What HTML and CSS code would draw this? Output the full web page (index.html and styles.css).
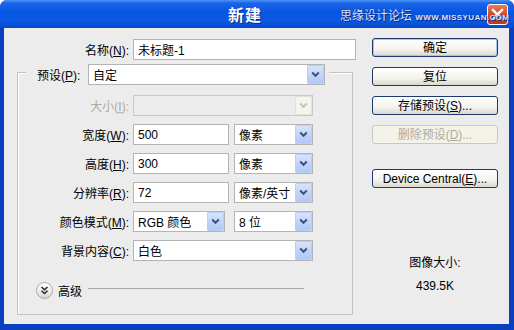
FILE: index.html
```html
<!DOCTYPE html>
<html lang="zh-CN">
  <head>
    <meta charset="UTF-8" />
    <title>新建</title>
    <link rel="stylesheet" href="styles.css">
  </head>
  <body>
    <div class="window">
      <div class="titlebar">
        <span class="title">新建</span>
        <span class="watermark">思缘设计论坛 <b>WWW.MISSYUAN.COM</b></span>
        <span class="close">
          <svg width="13" height="13" viewBox="0 0 13 13"><path d="M2 2 L11 11 M11 2 L2 11" stroke="#fff" stroke-width="2.4" stroke-linecap="square"/></svg>
        </span>
      </div>

      <div class="client">
        <div class="left">
          <div class="name-row">
            <label class="lbl">名称(<u>N</u>):</label>
            <input class="field name-field" type="text" value="未标题-1" />
          </div>

          <div class="group">
            <div class="group-head">
              <label class="head-lbl">预设(<u>P</u>):</label>
              <div class="combo w-preset">
                <span>自定</span>
                <span class="arrow"><svg width="9" height="7" viewBox="0 0 9 7"><polyline points="1.2,1.5 4.5,4.8 7.8,1.5" fill="none" stroke="#3c5384" stroke-width="2"/></svg></span>
              </div>
            </div>

            <div class="rows">
              <div class="row">
                <label class="lbl off">大小(<u>I</u>):</label>
                <div class="combo w-wide disabled">
                  <span></span>
                  <span class="arrow"><svg width="9" height="7" viewBox="0 0 9 7"><polyline points="1.2,1.5 4.5,4.8 7.8,1.5" fill="none" stroke="#c6c5bd" stroke-width="2"/></svg></span>
                </div>
              </div>
              <div class="row">
                <label class="lbl">宽度(<u>W</u>):</label>
                <input class="field w-num" type="text" value="500" />
                <div class="combo w-unit">
                  <span>像素</span>
                  <span class="arrow"><svg width="9" height="7" viewBox="0 0 9 7"><polyline points="1.2,1.5 4.5,4.8 7.8,1.5" fill="none" stroke="#3c5384" stroke-width="2"/></svg></span>
                </div>
              </div>
              <div class="row">
                <label class="lbl">高度(<u>H</u>):</label>
                <input class="field w-num" type="text" value="300" />
                <div class="combo w-unit">
                  <span>像素</span>
                  <span class="arrow"><svg width="9" height="7" viewBox="0 0 9 7"><polyline points="1.2,1.5 4.5,4.8 7.8,1.5" fill="none" stroke="#3c5384" stroke-width="2"/></svg></span>
                </div>
              </div>
              <div class="row">
                <label class="lbl">分辨率(<u>R</u>):</label>
                <input class="field w-num" type="text" value="72" />
                <div class="combo w-unit">
                  <span>像素/英寸</span>
                  <span class="arrow"><svg width="9" height="7" viewBox="0 0 9 7"><polyline points="1.2,1.5 4.5,4.8 7.8,1.5" fill="none" stroke="#3c5384" stroke-width="2"/></svg></span>
                </div>
              </div>
              <div class="row">
                <label class="lbl">颜色模式(<u>M</u>):</label>
                <div class="combo w-mode">
                  <span>RGB 颜色</span>
                  <span class="arrow"><svg width="9" height="7" viewBox="0 0 9 7"><polyline points="1.2,1.5 4.5,4.8 7.8,1.5" fill="none" stroke="#3c5384" stroke-width="2"/></svg></span>
                </div>
                <div class="combo w-bits">
                  <span>8 位</span>
                  <span class="arrow"><svg width="9" height="7" viewBox="0 0 9 7"><polyline points="1.2,1.5 4.5,4.8 7.8,1.5" fill="none" stroke="#3c5384" stroke-width="2"/></svg></span>
                </div>
              </div>
              <div class="row">
                <label class="lbl">背景内容(<u>C</u>):</label>
                <div class="combo w-wide">
                  <span>白色</span>
                  <span class="arrow"><svg width="9" height="7" viewBox="0 0 9 7"><polyline points="1.2,1.5 4.5,4.8 7.8,1.5" fill="none" stroke="#3c5384" stroke-width="2"/></svg></span>
                </div>
              </div>
            </div>

            <div class="advanced">
              <span class="round-btn">
                <svg width="9" height="9" viewBox="0 0 9 9"><polyline points="1.5,1 4.5,3.8 7.5,1" fill="none" stroke="#222" stroke-width="1.4"/><polyline points="1.5,4.8 4.5,7.6 7.5,4.8" fill="none" stroke="#222" stroke-width="1.4"/></svg>
              </span>
              <span class="adv-text">高级</span>
              <span class="adv-line"></span>
            </div>
          </div>
        </div>

        <div class="right">
          <button class="btn default">确定</button>
          <button class="btn">复位</button>
          <button class="btn">存储预设(<u>S</u>)...</button>
          <button class="btn" disabled>删除预设(<u>D</u>)...</button>
          <button class="btn device">Device Central(<u>E</u>)...</button>
          <div class="info">图像大小:</div>
          <div class="info size">439.5K</div>
        </div>
      </div>
    </div>
  </body>
</html>
```

FILE: styles.css
```css
body {
  margin: 0;
  background: #fff;
  font-family: "Liberation Sans", "Noto Sans CJK SC", sans-serif;
  font-size: 12px;
  color: #000;
}
u {
  text-decoration: underline;
}
.window {
  width: 514px;
  height: 330px;
  display: flex;
  flex-direction: column;
  background: #0b3fc2;
  border-radius: 7px 7px 0 0;
  overflow: hidden;
}
.titlebar {
  position: relative;
  height: 28px;
  flex: none;
  display: flex;
  align-items: center;
  background: linear-gradient(#4a93f7 0%, #1a63e6 12%, #0756e2 45%, #0a58e4 75%, #0848c8 100%);
}
.title {
  margin-left: 228px;
  color: #fff;
  font-size: 16px;
  font-weight: bold;
  letter-spacing: 1px;
  text-shadow: 1px 1px 0 #0a2a88;
}
.watermark {
  position: absolute;
  left: 340px;
  top: 6px;
  z-index: 2;
  color: #d7e4ff;
  font-size: 12px;
  text-shadow: 0 0 1px #0a2a88, 1px 1px 0 #0a2a88;
  white-space: nowrap;
}
.watermark b {
  font-size: 8px;
  letter-spacing: 0.4px;
}
.close {
  margin-left: auto;
  margin-right: 6px;
  width: 21px;
  height: 21px;
  box-sizing: border-box;
  border: 1px solid #fff;
  border-radius: 3px;
  background: linear-gradient(#e87a5c, #d2431e 60%, #c0381a);
  display: flex;
  align-items: center;
  justify-content: center;
}
.client {
  flex: 1;
  margin: 0 5px 6px 4px;
  background: #ececec;
  display: flex;
}
.left {
  width: 352px;
  padding-top: 11px;
}
.name-row,
.row,
.group-head {
  display: flex;
  align-items: center;
}
.lbl {
  width: 125px;
  margin-right: 4px;
  text-align: right;
  white-space: nowrap;
}
.row .lbl {
  width: 111px;
}
.lbl.off {
  color: #aeab9d;
}
.field {
  box-sizing: border-box;
  height: 21px;
  margin: 0;
  padding: 0 4px;
  border: 1px solid #b4b4b4;
  background: #fff;
  font: inherit;
}
.name-field {
  width: 223px;
}
.w-num {
  width: 96px;
  margin-right: 5px;
}
.combo {
  box-sizing: border-box;
  height: 21px;
  border: 1px solid #b4b4b4;
  background: #fff;
  display: flex;
  align-items: center;
  padding-left: 4px;
}
.combo span:first-child {
  flex: 1;
  white-space: nowrap;
}
.arrow {
  box-sizing: border-box;
  width: 17px;
  height: 19px;
  border: 1px solid #b8cdf7;
  border-radius: 1px;
  background: linear-gradient(#d6e4fd, #bed2f8 60%, #b2c9f5);
  display: flex;
  align-items: center;
  justify-content: center;
}
.combo.disabled {
  background: #ececec;
  border-color: #cbcac2;
}
.combo.disabled .arrow {
  background: #f4f4f0;
  border-color: #e2e1da;
}
.w-preset {
  width: 237px;
}
.w-wide {
  width: 180px;
}
.w-unit {
  width: 79px;
}
.w-mode {
  width: 92px;
  margin-right: 9px;
}
.w-bits {
  width: 79px;
}
.group {
  margin: 12px 0 0 13px;
  width: 336px;
  box-sizing: border-box;
  border: 1px solid #c3c2bb;
  box-shadow: inset 1px 1px 0 #fff;
}
.group-head {
  margin: -9px 0 0 8px;
  width: 303px;
  box-sizing: border-box;
  padding-left: 11px;
  background: #ececec;
}
.head-lbl {
  width: 48px;
  margin-right: 3px;
  white-space: nowrap;
}
.rows {
  display: flex;
  flex-direction: column;
  gap: 8px;
  margin-top: 10px;
}
.advanced {
  display: flex;
  align-items: center;
  height: 17px;
  margin-top: 21px;
  padding: 0 48px 15px 18px;
}
.round-btn {
  width: 17px;
  height: 17px;
  box-sizing: border-box;
  border: 1px solid #a9a9a9;
  border-radius: 50%;
  background: linear-gradient(#ffffff, #e6e6e6 70%, #d2d2d2);
  display: flex;
  align-items: center;
  justify-content: center;
}
.adv-text {
  margin-left: 5px;
}
.adv-line {
  flex: 1;
  margin: -5px 0 0 6px;
  border-top: 1px solid #a8a8a8;
}
.right {
  width: 126px;
  margin-left: 16px;
  padding-top: 10px;
  display: flex;
  flex-direction: column;
}
.btn {
  height: 19px;
  margin: 0 0 10px;
  padding: 0;
  border: 1px solid #1c3a6e;
  border-radius: 3px;
  background: linear-gradient(#ffffff, #f4f3ee 60%, #dcd8ce);
  font: inherit;
  color: #000;
  line-height: 16px;
}
.btn.default {
  box-shadow: inset 0 0 0 1px #a8c2f0;
}
.btn:disabled {
  border-color: #cac8bb;
  background: #f4f3ea;
  color: #aeab9d;
}
.btn.device {
  margin-top: 15px;
}
.info {
  text-align: center;
  margin-top: 58px;
  line-height: 14px;
}
.info.size {
  margin-top: 9px;
}
```
